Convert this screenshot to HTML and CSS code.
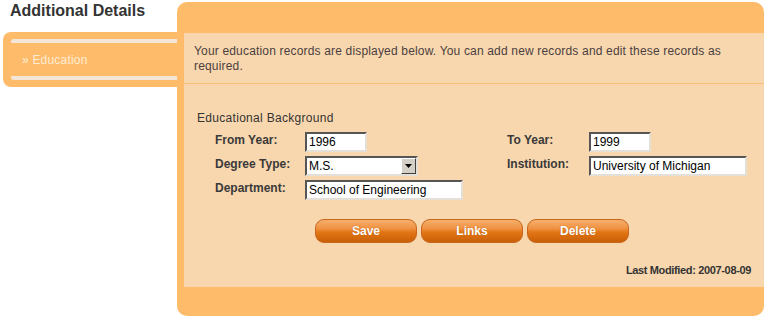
FILE: index.html
```html
<!DOCTYPE html>
<html><head><title>Additional Details</title>
<meta charset="utf-8">
<link rel="stylesheet" href="styles.css">
</head>
<body>
<div class="page">
	<div class="side">
		<h1 class="title">Additional Details</h1>
		<div class="tab">
			<div class="tabInner">&raquo; Education</div>
		</div>
	</div>

	<div class="panel">
		<div class="content">
			<div class="intro">Your education records are displayed below. You can add new records and edit these records as required.</div>

			<div class="formArea">
				<div class="groupTitle">Educational Background</div>
				<div class="fields">
					<label class="lbl">From Year:</label>
					<div><input class="txt w62" type="text" value="1996"></div>
					<label class="lbl">To Year:</label>
					<div><input class="txt w62" type="text" value="1999"></div>

					<label class="lbl">Degree Type:</label>
					<div>
						<div class="sel">
							<span class="selText">M.S.</span>
							<span class="selBtn">
								<svg width="7" height="4" viewBox="0 0 7 4"><path d="M0 0h7L3.5 4z" fill="#000"/></svg>
							</span>
						</div>
					</div>
					<label class="lbl">Institution:</label>
					<div><input class="txt w158" type="text" value="University of Michigan"></div>

					<label class="lbl">Department:</label>
					<div><input class="txt w158" type="text" value="School of Engineering"></div>
				</div>

				<div class="buttons">
					<button class="btn">Save</button>
					<button class="btn">Links</button>
					<button class="btn">Delete</button>
				</div>

				<div class="modified">Last Modified: 2007-08-09</div>
			</div>
		</div>
	</div>
</div>
</body></html>
```

FILE: styles.css
```css
body {
	margin: 0;
	font-family: "Liberation Sans", Arial, sans-serif;
	font-size: 12px;
	color: #4b3f3f;
	background: #fff;
}
.page {
	display: flex;
	align-items: flex-start;
}
.side {
	width: 177px;
	flex: none;
}
.title {
	margin: 0;
	padding: 2px 0 0 10px;
	font-size: 16px;
	line-height: 18px;
	font-weight: bold;
	color: #333;
}
.tab {
	margin: 12px 0 0 3px;
	background-color: #febc6a;
	border-radius: 8px 0 0 8px;
	padding: 7px 0 7px 8px;
}
.tabInner {
	border-top: 4px solid #f3e6d9;
	border-bottom: 4px solid #f3e6d9;
	border-radius: 3px 0 0 3px;
	height: 33px;
	line-height: 35px;
	padding-left: 11px;
	color: #fdebd6;
	letter-spacing: 0.2px;
}
.panel {
	flex: 1;
	margin-top: 2px;
	height: 314px;
	box-sizing: border-box;
	padding: 31px 0 29px 7px;
	background-color: #febc6a;
	border-radius: 10px;
	display: flex;
}
.content {
	flex: 1;
	background-color: #f9d7ae;
	display: flex;
	flex-direction: column;
}
.intro {
	padding: 11px 12px 9px 10px;
	line-height: 15px;
	letter-spacing: 0.17px;
	border-bottom: 1px solid #f6be74;
}
.formArea {
	padding: 27px 13px 0 13px;
}
.groupTitle {
	line-height: 15px;
	color: #333;
	letter-spacing: 0.3px;
}
.fields {
	display: grid;
	grid-template-columns: 90px 202px 82px auto;
	row-gap: 4px;
	margin: 6px 0 0 18px;
}
.lbl {
	font-weight: bold;
	color: #3a3a3a;
	line-height: 16px;
}
.txt {
	box-sizing: border-box;
	height: 20px;
	margin: 0;
	padding: 0 2px;
	font-family: "Liberation Sans", Arial, sans-serif;
	font-size: 12px;
	color: #000;
	background: #fff;
	border-style: solid;
	border-width: 2px;
	border-color: #555 #e4e0d8 #e4e0d8 #555;
	border-radius: 0;
	outline: none;
}
.w62 { width: 62px; }
.w158 { width: 158px; }
.sel {
	box-sizing: border-box;
	width: 113px;
	height: 20px;
	display: flex;
	align-items: center;
	background: #fff;
	border-style: solid;
	border-width: 2px;
	border-color: #555 #e4e0d8 #e4e0d8 #555;
	color: #000;
}
.selText {
	flex: 1;
	padding-left: 2px;
}
.selBtn {
	box-sizing: border-box;
	width: 15px;
	height: 16px;
	background: #d4d0c8;
	border-style: solid;
	border-width: 1px;
	border-color: #fff #404040 #404040 #fff;
	display: flex;
	align-items: center;
	justify-content: center;
}
.buttons {
	display: flex;
	justify-content: center;
	gap: 4px;
	margin-top: 19px;
	padding-right: 4px;
}
.btn {
	width: 102px;
	height: 24px;
	padding: 0;
	border: 1px solid #c8661c;
	border-radius: 9px;
	background: linear-gradient(#f6b06c 0%, #ef9040 40%, #e27616 55%, #c95f06 100%);
	color: #fff;
	font-family: "Liberation Sans", Arial, sans-serif;
	font-size: 12px;
	font-weight: bold;
	text-shadow: 0 0 1px #b65406;
}
.modified {
	margin-top: 21px;
	text-align: right;
	font-size: 11px;
	font-weight: bold;
	line-height: 13px;
	letter-spacing: -0.35px;
	color: #333;
}
```
